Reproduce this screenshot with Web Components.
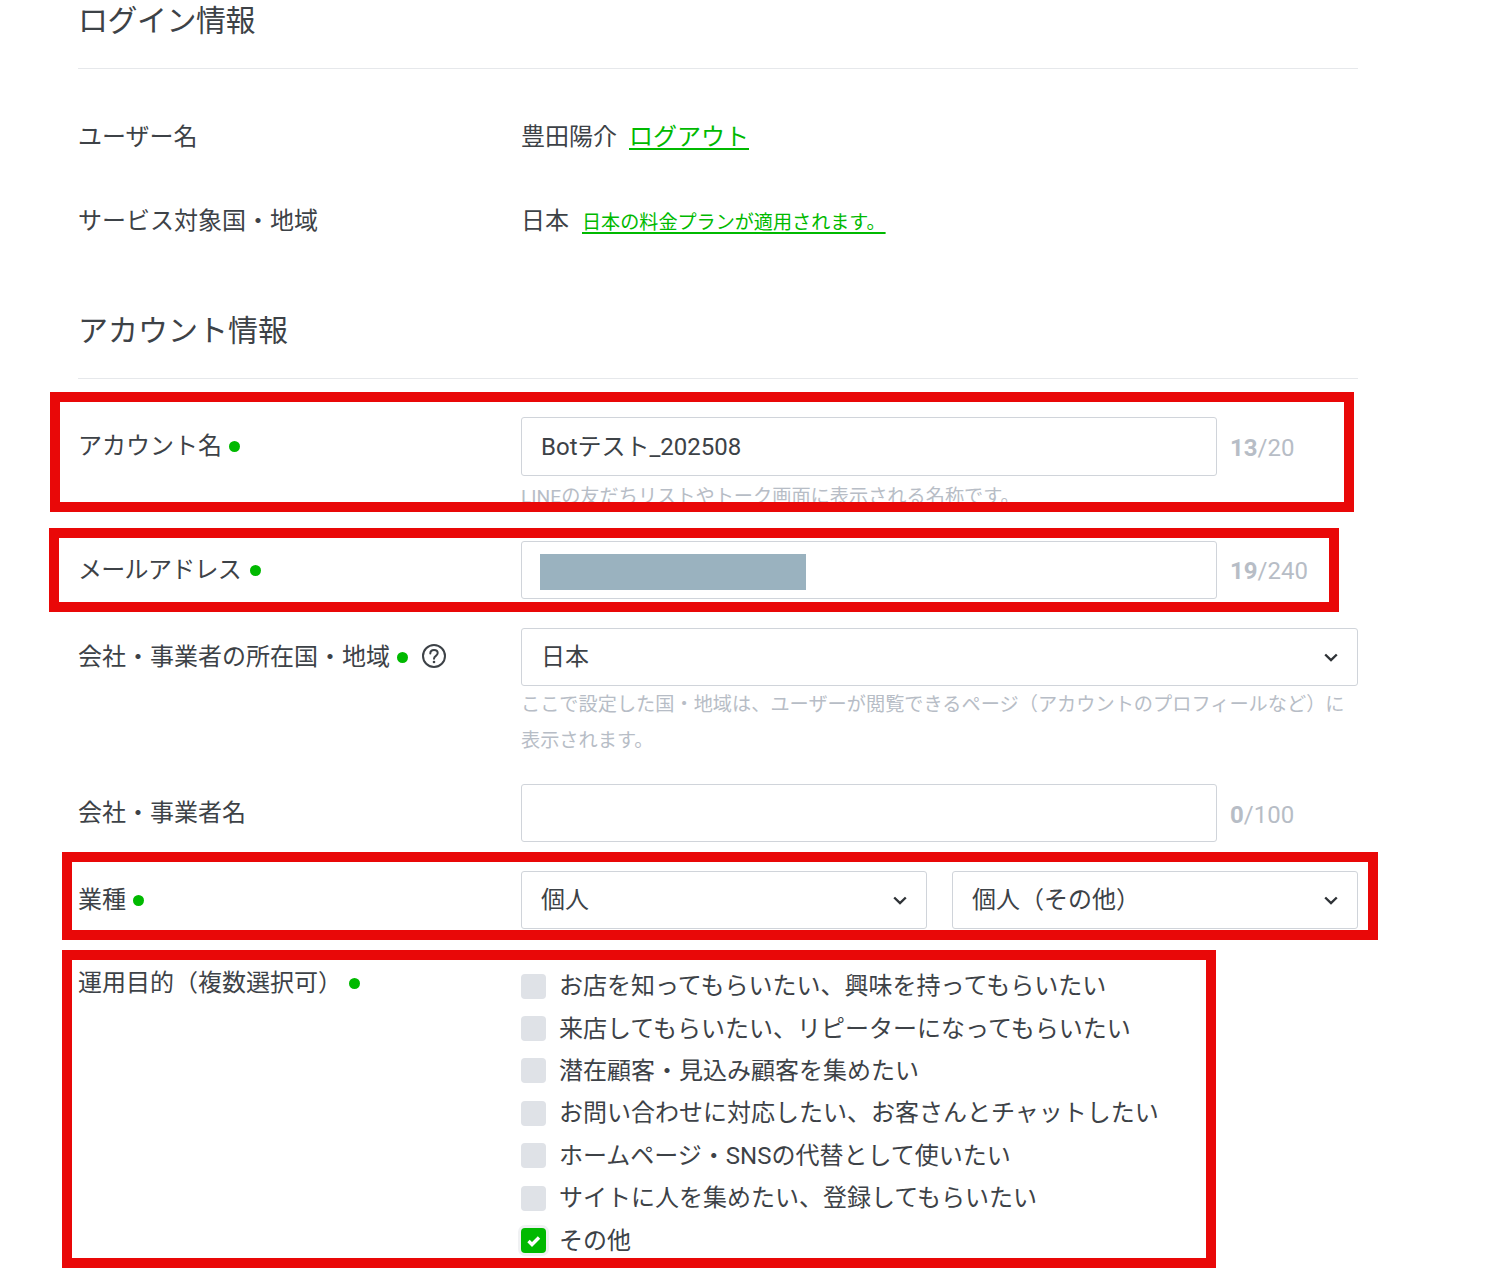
<!DOCTYPE html>
<html lang="ja">
<head>
<meta charset="utf-8">
<title>アカウント設定</title>
<style>
html, body { margin: 0; background: #fff; }
body {
    font-family: Roboto, "Noto Sans CJK JP", sans-serif;
    color: #3d4247;
    font-size: 24px;
    line-height: 36px;
}
</style>
</head>
<body>
<account-page>
    <section-title style="letter-spacing:-0.5px">ログイン情報</section-title>
    <form-row style="--top:50px;--after:48px" label="ユーザー名" plain>
        <span>豊田陽介</span><link-text big>ログアウト</link-text>
    </form-row>
    <form-row style="--after:71px" label="サービス対象国・地域" plain>
        <span>日本</span><link-text>日本の料金プランが適用されます。</link-text>
    </form-row>
    <section-title>アカウント情報</section-title>
    <form-row style="--top:38px;--after:26px" label="アカウント名" required>
        <text-field style="--field-h:59px" count="13" max="20">Botテスト_202508</text-field>
        <hint-text style="margin-top:3px">LINEの友だちリストやトーク画面に表示される名称です。</hint-text>
    </form-row>
    <form-row style="--label-spacing:-0.7px" label="メールアドレス" required dot-gap="9">
        <text-field count="19" max="240"><redact-box></redact-box></text-field>
    </form-row>
    <form-row style="--after:25px" label="会社・事業者の所在国・地域" required help>
        <select-field>日本</select-field>
        <hint-text style="margin-top:1px">ここで設定した国・地域は、ユーザーが閲覧できるページ（アカウントのプロフィールなど）に表示されます。</hint-text>
    </form-row>
    <form-row label="会社・事業者名">
        <text-field style="--count-top:4px" count="0" max="100"></text-field>
    </form-row>
    <form-row style="--after:26px" label="業種" required>
        <div style="display:grid;grid-template-columns:406px 406px;column-gap:25px">
            <select-field>個人</select-field>
            <select-field>個人（その他）</select-field>
        </div>
    </form-row>
    <form-row style="--label-top:10px" label="運用目的（複数選択可）" required>
        <div style="display:flex;flex-direction:column;row-gap:6.4px;padding-top:13.2px">
            <check-item>お店を知ってもらいたい、興味を持ってもらいたい</check-item>
            <check-item>来店してもらいたい、リピーターになってもらいたい</check-item>
            <check-item>潜在顧客・見込み顧客を集めたい</check-item>
            <check-item>お問い合わせに対応したい、お客さんとチャットしたい</check-item>
            <check-item>ホームページ・SNSの代替として使いたい</check-item>
            <check-item>サイトに人を集めたい、登録してもらいたい</check-item>
            <check-item checked>その他</check-item>
        </div>
    </form-row>
    <red-frame slot="overlay" style="left:50px;top:392px;width:1304px;height:120px"></red-frame>
    <red-frame slot="overlay" style="left:49px;top:528px;width:1290px;height:84px"></red-frame>
    <red-frame slot="overlay" style="left:62px;top:852px;width:1316px;height:88px"></red-frame>
    <red-frame slot="overlay" style="left:62px;top:950px;width:1154px;height:318px"></red-frame>
</account-page>
<script>
class AccountPage extends HTMLElement {
    constructor() {
        super();
        this.attachShadow({ mode: 'open' }).innerHTML = `
        <style>
        :host { display: block; position: relative; height: 1284px; overflow: hidden; }
        .content { width: 1280px; padding-left: 78px; }
        </style>
        <div class="content"><slot></slot></div>
        <slot name="overlay"></slot>
        `;
    }
}

class SectionTitle extends HTMLElement {
    constructor() {
        super();
        this.attachShadow({ mode: 'open' }).innerHTML = `
        <style>
        :host {
            display: block;
            font-size: 30px;
            line-height: 42px;
            padding-bottom: 26px;
            border-bottom: 1px solid #e6e8eb;
        }
        </style>
        <slot></slot>
        `;
    }
}

class FormRow extends HTMLElement {
    constructor() {
        super();
        const label = this.getAttribute('label');
        const plain = this.hasAttribute('plain');
        const dot = this.hasAttribute('required')
            ? `<span class="dot" style="margin-left:${this.getAttribute('dot-gap') || 7}px"></span>` : '';
        const help = this.hasAttribute('help') ? `
            <svg class="help" width="24" height="24" viewBox="0 0 24 24" fill="none" stroke="#3d4247" stroke-width="2">
                <circle cx="12" cy="12" r="11"/>
                <path d="M8.3 9.4c0-2.2 1.600-3.500 3.700-3.500 2.100 0 3.700 1.300 3.700 3.200 0 2.900-3.700 2.700-3.700 5.700" stroke-linecap="round"/>
                <circle cx="12" cy="18" r="1.300" fill="#3d4247" stroke="none"/>
            </svg>` : '';
        this.attachShadow({ mode: 'open' }).innerHTML = `
        <style>
        :host {
            display: flex;
            margin-top: var(--top, 0);
            margin-bottom: var(--after, 29px);
        }
        .label {
            flex: 0 0 443px;
            display: flex;
            align-items: center;
            align-self: flex-start;
            padding-top: ${plain ? '0' : 'var(--label-top, 11px)'};
            letter-spacing: var(--label-spacing, 0);
        }
        .dot { width: 11px; height: 11px; border-radius: 50%; background: #00b900; }
        .help { margin: 0 0 2px 14px; }
        .body { flex: 1; min-width: 0; ${plain ? 'height: 36px;' : ''} }
        </style>
        <div class="label"><span>${label}</span>${dot}${help}</div>
        <div class="body"><slot></slot></div>
        `;
    }
}

class LinkText extends HTMLElement {
    constructor() {
        super();
        const big = this.hasAttribute('big');
        this.attachShadow({ mode: 'open' }).innerHTML = `<style>
        :host {
            display: inline;
            margin-left: ${big ? 12 : 13}px;
            color: #00b900;
            font-size: ${big ? 24 : 19.1}px;
            text-decoration: underline;
            text-decoration-thickness: ${big ? 2 : 1.5}px;
            text-underline-offset: 3px;
        }
        </style><slot></slot>`;
    }
}

class TextField extends HTMLElement {
    constructor() {
        super();
        this.attachShadow({ mode: 'open' }).innerHTML = `
        <style>
        :host { display: grid; grid-template-columns: 696px auto; column-gap: 13px; align-items: center; }
        .box {
            box-sizing: border-box;
            height: var(--field-h, 58px);
            padding: 0 19px;
            border: 1px solid #d0d4da;
            border-radius: 3px;
            display: flex;
            align-items: center;
        }
        .count { color: #b7bdc6; padding-top: var(--count-top, 2px); }
        b { font-weight: 700; }
        </style>
        <div class="box"><slot></slot></div>
        <div class="count"><b>${this.getAttribute('count')}</b>/${this.getAttribute('max')}</div>
        `;
    }
}

class RedactBox extends HTMLElement {
    constructor() {
        super();
        this.attachShadow({ mode: 'open' }).innerHTML = `
        <style>
        :host { display: block; width: 266px; height: 36px; margin: 4px 0 0 -1px; background: #9ab2bf; }
        </style>
        `;
    }
}

class SelectField extends HTMLElement {
    constructor() {
        super();
        this.attachShadow({ mode: 'open' }).innerHTML = `
        <style>
        :host {
            box-sizing: border-box;
            display: flex;
            align-items: center;
            justify-content: space-between;
            height: 58px;
            padding: 0 19px;
            border: 1px solid #d0d4da;
            border-radius: 3px;
        }
        svg { display: block; }
        </style>
        <span><slot></slot></span>
        <svg width="14" height="9" viewBox="0 0 14 9" fill="none" stroke="#2f3337" stroke-width="2.400">
            <path d="M1.200 1.500 7 7 12.800 1.500"/>
        </svg>
        `;
    }
}

class HintText extends HTMLElement {
    constructor() {
        super();
        this.attachShadow({ mode: 'open' }).innerHTML = `
        <style>
        :host { display: block; color: #b7bdc6; font-size: 19.2px; line-height: 36px; }
        </style>
        <slot></slot>
        `;
    }
}

class CheckItem extends HTMLElement {
    constructor() {
        super();
        const checked = this.hasAttribute('checked');
        const tick = checked ? `
            <svg width="25" height="25" viewBox="0 0 25 25" fill="none" stroke="#fff" stroke-width="3.400">
                <path d="M7.500 13 11 16.500 18 9.500"/>
            </svg>` : '';
        this.attachShadow({ mode: 'open' }).innerHTML = `
        <style>
        :host { display: flex; align-items: center; column-gap: 13px; }
        .box {
            flex: 0 0 25px;
            height: 25px;
            border-radius: 4px;
            background: ${checked ? '#00b900' : '#dfe2e7'};
            ${checked ? 'box-shadow: 0 0 0 3px #f0f1f3;' : ''}
        }
        svg { display: block; }
        </style>
        <div class="box">${tick}</div>
        <span><slot></slot></span>
        `;
    }
}

class RedFrame extends HTMLElement {
    constructor() {
        super();
        this.attachShadow({ mode: 'open' }).innerHTML = `
        <style>
        :host {
            box-sizing: border-box;
            display: block;
            position: absolute;
            border: 10px solid #e90808;
            pointer-events: none;
        }
        </style>
        `;
    }
}

customElements.define('account-page', AccountPage);
customElements.define('section-title', SectionTitle);
customElements.define('form-row', FormRow);
customElements.define('link-text', LinkText);
customElements.define('text-field', TextField);
customElements.define('redact-box', RedactBox);
customElements.define('select-field', SelectField);
customElements.define('hint-text', HintText);
customElements.define('check-item', CheckItem);
customElements.define('red-frame', RedFrame);
</script>
</body>
</html>
